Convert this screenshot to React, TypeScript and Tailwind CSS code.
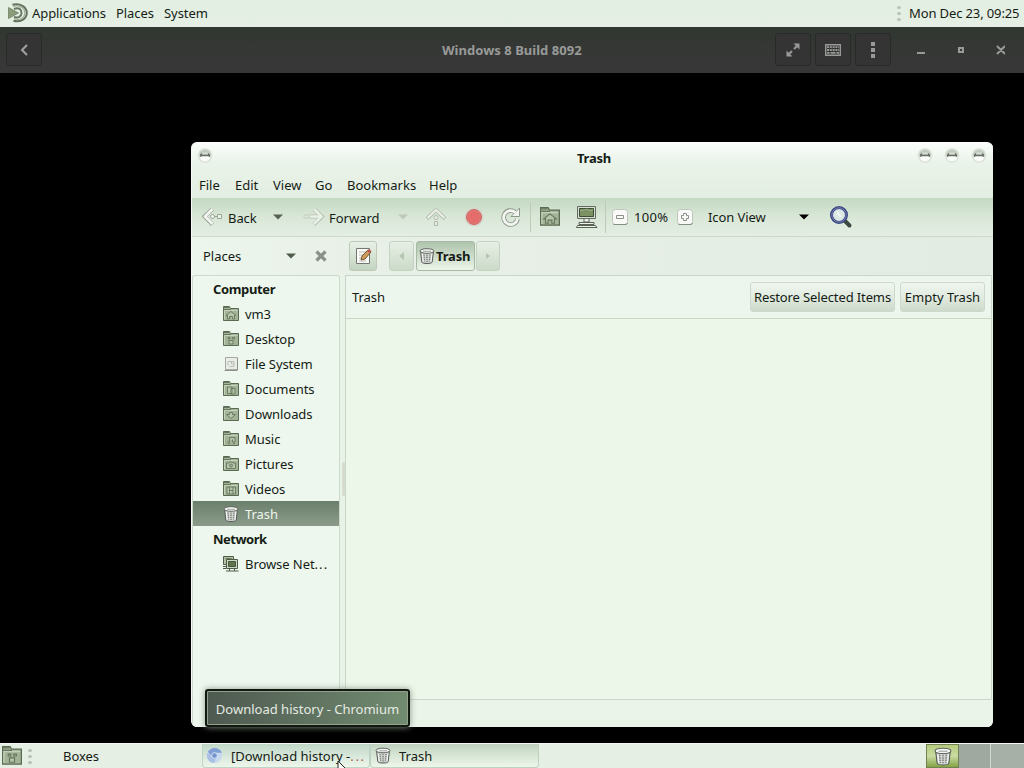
import React from 'react';

const Folder = ({ mark, className = 'w-4 h-4' }: { mark?: string; className?: string }) => (
  <svg className={className} viewBox="0 0 16 16" fill="none">
    <path d="M.5 14.500V.5h6l1 2h8v12z" fill="#a3b397" stroke="#5a6b53" />
    <path d="M1.500 13.500v-9h13" stroke="#c5d1ba" />
    <path d="M1 1.500h5M1 3.500h7" stroke="#66775f" />
    {mark && <path d={mark} fill="#b7c5ab" stroke="#64765c" strokeWidth=".9" />}
  </svg>
);

const marks = {
  home: 'M3 9.500l5-4 5 4h-1.500v3.500H9.500v-2.500h-3v2.500h-2V9.500z',
  desktop: 'M5 6.500h2v1.500H5zM9.500 6.500h2v1.500h-2zM6 9.500h4v3.500H6z',
  documents: 'M4.500 6h4.500v6.500H4.500zM8 7.500h4v5.500H8z',
  downloads: 'M3.500 8.500H6.500V6.500h3v2h3L8 12.500z',
  music: 'M4 11h2.500V6.500h5.500V11H9.500V8.500M5 12.500h2M10 12.500h2',
  pictures: 'M3.500 7h2.500l1-1h2l1 1h2.500v5.500h-9zM6.500 9.500a1.500 1.500 0 1 0 3 0a1.500 1.500 0 1 0-3 0z',
  videos: 'M4 6h8.500v7H4zM6.500 6v7M10 6v7M6.500 9.500h3.500',
};

const Trash = ({ className = 'w-4 h-4' }: { className?: string }) => (
  <svg className={className} viewBox="0 0 16 16" fill="none">
    <path d="M1.500 3l1.300 11c.2 1.100 2.500 1.500 5.200 1.500s5-.4 5.200-1.500L14.500 3z" fill="#d3d6d3" stroke="#555b57" />
    <path d="M5 6.500l.6 7M8 6.500v7.500M11 6.500l-.6 7" stroke="#747a73" strokeWidth="1.300" strokeDasharray="1.300 .8" />
    <path d="M12.800 6l-.8 7.500M3.300 6l.8 7.500" stroke="#fff" strokeWidth=".8" />
    <ellipse cx="8" cy="3" rx="7" ry="2.300" fill="#f6f7f6" stroke="#5f645f" />
    <path d="M4 3.300h8" stroke="#9ea49d" />
  </svg>
);

const Drive = () => (
  <svg className="w-4 h-4" viewBox="0 0 16 16" fill="none">
    <path d="M2.500 1.500h12v12h-12z" fill="#e9ece7" stroke="#a5aba4" />
    <path d="M1.500 14.500h13M14.500 2v12" stroke="#8c938b" />
    <path d="M5 9.500v-4h6v5H6.500M8.500 5v3h3" stroke="#b9bfb7" />
  </svg>
);

const Network = () => (
  <svg className="w-4 h-4" viewBox="0 0 16 16" fill="none">
    <path d="M.5 .5h10v8H.5z" fill="#b5c1a8" stroke="#4c5c46" />
    <path d="M2.500 2.500h6" stroke="#6a7d58" />
    <path d="M3.500 3.500h11v9h-11z" fill="#cfd8c5" stroke="#4c5c46" />
    <path d="M5.500 5.500h7v5h-7z" fill="#62764e" stroke="#46583c" />
    <path d="M0 10.500h3M0 12.500h3M6.500 13v2M11.500 13v2M3 15h12.500" stroke="#4c5c46" />
  </svg>
);

const Caret = ({ color }: { color: string }) => (
  <svg className="w-[10px] h-[6px] shrink-0" viewBox="0 0 10 6">
    <path d="M0 .5h10L5 5.500z" fill={color} />
  </svg>
);

const WinButton = () => (
  <svg className="w-[16px] h-[16px]" viewBox="0 0 16 16">
    <circle cx="8" cy="8.500" r="7.500" fill="#dfe6dc" />
    <circle cx="8" cy="8.500" r="6" fill="#c3cac1" />
    <path d="M2.500 9.500l1.500-1h8l1.500 1a5.500 5 0 0 1-11 0z" fill="#fbfdfa" />
    <path d="M3 10V7.500L5 6v1.700h6V6l2 1.500V10l-2-.8H5z" fill="#687065" />
    <path d="M5.500 5.500h5l-.5 1.500H6z" fill="#d9dfd7" />
  </svg>
);

const Zoom = ({ d }: { d: string }) => (
  <svg className="w-4 h-4 shrink-0" viewBox="0 0 16 16" fill="none">
    <rect x=".5" y=".5" width="15" height="15" rx="3" fill="#f9faf8" stroke="#bfc5bc" />
    <path d="M1.500 15.500h13l1-1.500" stroke="#878e84" />
    <path d={d} stroke="#8a9187" />
  </svg>
);

const places = [
  { name: 'vm3', icon: <Folder mark={marks.home} /> },
  { name: 'Desktop', icon: <Folder mark={marks.desktop} /> },
  { name: 'File System', icon: <Drive /> },
  { name: 'Documents', icon: <Folder mark={marks.documents} /> },
  { name: 'Downloads', icon: <Folder mark={marks.downloads} /> },
  { name: 'Music', icon: <Folder mark={marks.music} /> },
  { name: 'Pictures', icon: <Folder mark={marks.pictures} /> },
  { name: 'Videos', icon: <Folder mark={marks.videos} /> },
  { name: 'Trash', icon: <Trash />, active: true },
];

const Dots = () => (
  <div className="flex flex-col gap-[3px] w-1">
    <span className="h-[3px] w-[4px] rounded-sm bg-[#bcc4ba]" />
    <span className="h-[3px] w-[4px] rounded-sm bg-[#bcc4ba]" />
    <span className="h-[3px] w-[4px] rounded-sm bg-[#bcc4ba]" />
  </div>
);

const TopPanel = () => (
  <div className="h-[27px] shrink-0 flex items-center pb-px bg-linear-to-b from-[#e3efe2] to-[#e5efe5]">
    <svg className="w-[20px] h-[20px] ml-2 shrink-0" viewBox="0 0 20 20" fill="none">
      <path d="M4.500 1.800C12 -.5 18.800 4 18.800 10S12 19.500 5.500 17.800" stroke="#62725e" strokeWidth="2" />
      <path d="M5 3.500C11.500 1.500 16.800 5 16.800 10S12 17.500 6 16" stroke="#a3b19b" strokeWidth="1.200" />
      <path d="M6 6C11 4 13.500 6.500 13.500 10s-3.500 5.500-7.500 4" stroke="#697a64" strokeWidth="2" />
      <path d="M.5 4.500v11L10.500 10z" fill="#8b9c7b" stroke="#6f8065" strokeWidth=".8" />
    </svg>
    <span className="w-[88px] shrink-0 pl-1">Applications</span>
    <span className="w-12 shrink-0">Places</span>
    <span>System</span>
    <div className="ml-auto w-3 shrink-0"><Dots /></div>
    <span className="w-[115px] shrink-0 tracking-[-0.12px]">Mon Dec 23, 09:25</span>
  </div>
);

const boxButton = 'w-[36px] h-[33px] rounded-[3px] border border-[#282a28] bg-[#333433] flex items-center justify-center';

const BoxesBar = () => (
  <div className="relative h-[46px] shrink-0 flex items-center pl-[6px] pb-px bg-linear-to-b from-[#303730] via-[#353735] to-[#373737] text-[#989a98]">
    <div className={boxButton}>
      <svg className="w-[10px] h-[12px]" viewBox="0 0 10 12" fill="none">
        <path d="M8 1L3 6l5 5" stroke="#a0a2a0" strokeWidth="2" />
      </svg>
    </div>
    <span className="absolute left-[442px] font-bold tracking-[0.03px]">Windows 8 Build 8092</span>
    <div className="ml-auto flex items-center gap-1 mr-[19px]">
      <div className={boxButton}>
        <svg className="w-[16px] h-[16px]" viewBox="0 0 16 16" fill="none">
          <path d="M9 7l4-4M7 9l-4 4" stroke="#989a98" strokeWidth="2" />
          <path d="M8.500 1.500h6v6zM1.500 8.500v6h6z" fill="#989a98" />
        </svg>
      </div>
      <div className={boxButton}>
        <svg className="w-[16px] h-[12px]" viewBox="0 0 16 12" fill="none">
          <path d="M.7.7h14.600v10.600H.7z" stroke="#989a98" strokeWidth="1.400" />
          <path d="M2 3.200h12M2 6h12" stroke="#989a98" strokeWidth="1.800" strokeDasharray="2 .8" />
          <path d="M2 8.800h2.500m1 0h5m1 0h2.500" stroke="#989a98" strokeWidth="1.800" />
        </svg>
      </div>
      <div className={boxButton}>
        <svg className="w-1 h-[16px]" viewBox="0 0 4 16" fill="#989a98">
          <path d="M0 0h4v4H0zM0 6h4v4H0zM0 12h4v4H0z" />
        </svg>
      </div>
      <svg className="w-[88px] h-[12px] ml-[22px]" viewBox="0 0 88 12" fill="none" stroke="#989a98" strokeWidth="2">
        <path d="M0 9h8M42 4h4v4h-4zM80 2l8 8M88 2l-8 8" />
      </svg>
    </div>
  </div>
);

const Toolbar = () => (
  <div className="h-[39px] shrink-0 flex items-center pl-[10px] border-b border-[#ccd8ca] bg-linear-to-b from-[#c4d9c3] via-[#d9e7d7] to-[#e4eee3]">
    <svg className="w-[22px] h-[20px] shrink-0" viewBox="0 0 22 20" fill="none">
      <path d="M10.500 2L2.500 9.500l8 8" stroke="#9ca598" strokeWidth="4" />
      <path d="M10.500 2L3 9.500l7.500 7.500" stroke="#f3f6f1" strokeWidth="2.500" />
      <path d="M8.500 9.500a2 2 0 1 1 4 0a2 2 0 1 1-4 0M15.500 7.500h4v4h-4zM12.500 9.500h3" fill="#edf2eb" stroke="#9ca598" />
    </svg>
    <span className="w-[49px] pl-1 pt-px">Back</span>
    <Caret color="#566352" />
    <svg className="w-[22px] h-[20px] ml-5 shrink-0" viewBox="0 0 22 20" fill="none">
      <path d="M1 8h4v3H1z" fill="#e1eadf" stroke="#c3cdbf" />
      <path d="M11 2l8 7.500-8 8M6 9.500h12" stroke="#b8c2b4" strokeWidth="4" />
      <path d="M11 2l7.500 7.500-7.500 7.500M6.500 9.500h11.500" stroke="#e9f0e6" strokeWidth="2.500" />
    </svg>
    <span className="w-[73px] pl-1 pt-px tracking-normal">Forward</span>
    <Caret color="#bdcabb" />
    <svg className="w-[20px] h-[20px] ml-[18px]" viewBox="0 0 20 20" fill="none">
      <path d="M1 11.500l9-8.500 9 8.500" stroke="#b0baad" strokeWidth="3.800" />
      <path d="M1.500 11l8.500-8 8.500 8" stroke="#e9efe6" strokeWidth="2.300" />
      <path d="M8 10.500a2 2 0 1 1 4 0a2 2 0 1 1-4 0M8.500 14.500h3v4h-3z" fill="#e7ede4" stroke="#b0b9ad" />
    </svg>
    <svg className="w-[20px] h-[20px] ml-[18px]" viewBox="0 0 20 20">
      <circle cx="10" cy="10" r="9.500" fill="#d3d6cd" />
      <circle cx="10" cy="10" r="7.500" fill="#dc7772" stroke="#d96864" />
      <circle cx="10" cy="10" r="5.500" fill="#e66c6b" />
    </svg>
    <svg className="w-[22px] h-[20px] ml-[16px]" viewBox="0 0 22 20" fill="none">
      <path d="M17.500 12A7 7 0 1 1 15 5" stroke="#8f988c" strokeWidth="4.600" />
      <path d="M19.500 1v8.500h-8.500z" fill="#f3f6f1" stroke="#8f988c" />
      <path d="M17.500 12A7 7 0 1 1 15.500 5.500" stroke="#f3f6f1" strokeWidth="2.800" />
    </svg>
    <span className="w-px h-[30px] bg-[#bdcaba] ml-[8px] mr-[9px]" />
    <Folder mark={marks.home} className="w-[20px] h-[20px]" />
    <svg className="w-[22px] h-[22px] ml-[16px]" viewBox="0 0 22 22" fill="none">
      <path d="M1.500.5h18v12h-18z" fill="#d9ded4" stroke="#636d5d" />
      <path d="M3.500 2.500h14v8h-14z" fill="#7c9264" stroke="#3c4f35" />
      <path d="M4 5l7-2 4 2 2-2" stroke="#96a981" />
      <path d="M8 13v3h5v-3M3 16.500h15v2H3zM.5 21.500l1-2h18l1.500 2z" fill="#eef0eb" stroke="#596354" />
    </svg>
    <span className="w-px h-[32px] bg-[#bdcaba] ml-[7px] mr-[6px]" />
    <Zoom d="M4.500 6.500h7v3h-7z" />
    <span className="w-[49px] pl-[6px] tracking-[0.3px]">100%</span>
    <Zoom d="M6.500 4.500h3v2h2v3h-2v2h-3v-2h-2v-3h2z" />
    <span className="w-[106px] pl-[15px]">Icon View</span>
    <Caret color="#000" />
    <svg className="w-6 h-6 ml-[20px] shrink-0" viewBox="0 0 24 24" fill="none">
      <path d="M15 15l5.500 5.500" stroke="#3b4943" strokeWidth="4" strokeLinecap="round" />
      <circle cx="10" cy="10" r="7.500" fill="#dce8e6" stroke="#3a4680" strokeWidth="3" />
      <circle cx="10" cy="10" r="7.200" stroke="#7d89b9" strokeWidth=".9" />
      <path d="M8 7l4 5" stroke="#f2f7f3" strokeWidth="2" />
    </svg>
  </div>
);

const LocationBar = () => (
  <div className="h-[38px] shrink-0 flex items-center pl-[11px] bg-linear-to-r from-[#edf6ec] via-[#e8f0e8] via-20% to-[#e3ece3]">
    <span className="w-[83px] tracking-normal">Places</span>
    <Caret color="#4e5a4b" />
    <svg className="w-3 h-3 ml-[19px]" viewBox="0 0 12 12" fill="none">
      <path d="M1.500 1.500l9 9M10.500 1.500l-9 9" stroke="#899286" strokeWidth="3.200" />
    </svg>
    <div className="w-[28px] h-[30px] ml-[22px] rounded-[3px] border border-[#bbcbb8] bg-linear-to-b from-[#e9f1e7] to-[#c3d4c1] flex items-center justify-center">
      <svg className="w-[17px] h-[18px]" viewBox="0 0 17 18" fill="none">
        <path d="M1.500 1.500h13v15h-13z" fill="#fbfbf9" stroke="#72786f" />
        <path d="M4 5h7M4 8h5M4 11h4M4 14h7" stroke="#b8beb5" />
        <path d="M6 13l1-4 6-6 3 2-6 7z" fill="#ce9b59" stroke="#76583a" />
        <path d="M12 4l2-2 2.500 2-2 2z" fill="#bb5852" />
      </svg>
    </div>
    <div className="w-[25px] h-[30px] ml-[12px] rounded-[3px] border border-[#c5d3c3] bg-linear-to-b from-[#e7efe5] to-[#cbdbc9] flex items-center justify-center">
      <svg className="w-[6px] h-[8px]" viewBox="0 0 6 8"><path d="M5 0v8L0 4z" fill="#b6c6b3" /></svg>
    </div>
    <div className="w-[59px] h-[30px] ml-[2px] rounded-[3px] border border-[#a6b9a4] bg-linear-to-b from-[#afc4ad] via-[#ccdcc9] to-[#edf5ea] flex items-center pl-[2px]">
      <Trash className="w-[16px] h-[18px] shrink-0" />
      <span className="font-bold pl-[1px] tracking-[-0.15px]">Trash</span>
    </div>
    <div className="w-6 h-[30px] ml-[1px] rounded-[3px] border border-[#c5d3c3] bg-linear-to-b from-[#e7efe5] to-[#cbdbc9] flex items-center justify-center">
      <svg className="w-[6px] h-[8px]" viewBox="0 0 6 8"><path d="M1 1v6l4-3z" fill="#b6c6b3" /></svg>
    </div>
  </div>
);

const Sidebar = () => (
  <div className="w-[148px] shrink-0 border border-[#cdd9cb] border-b-0 rounded-t-[3px] bg-[#edf7ed] leading-[25px]">
    <div className="h-[25px] pl-[20px] pt-px font-bold tracking-[-0.35px]">Computer</div>
    {places.map((place) => (
      <div
        key={place.name}
        className={
          place.active
            ? 'h-[25px] flex items-center pt-px pl-[30px] bg-linear-to-b from-[#6b806c] to-[#8b9b8a] text-[#eef5ed]'
            : 'h-[25px] flex items-center pt-px pl-[30px]'
        }
      >
        <span className="w-[22px]">{place.icon}</span>
        {place.name}
      </div>
    ))}
    <div className="h-[25px] pl-[20px] pt-px font-bold tracking-[-0.5px]">Network</div>
    <div className="h-[25px] flex items-center pt-px pl-[30px]">
      <span className="w-[22px]"><Network /></span>
      Browse Net<span className="tracking-[1.1px]">...</span>
    </div>
  </div>
);

const actionButton = 'h-[30px] rounded-[3px] border border-[#ced8cc] bg-linear-to-b from-[#eff6ee] via-[#e1ebe0] to-[#cddacb] flex items-center justify-center';

const FileManager = () => (
  <div className="absolute left-[191px] top-[69px] w-[802px] h-[585px] rounded-[6px] overflow-hidden flex flex-col bg-[#e8f2e7] border-t border-l border-t-white border-l-[#f4faf3]">
    <div className="h-[55px] shrink-0 flex flex-col bg-linear-to-b from-[#fbfdfb] via-[#eaf3e9] via-35% to-[#e3eee2]">
      <div className="h-[29px] flex items-center">
        <div className="ml-[5px] mb-[5px]"><WinButton /></div>
        <span className="grow text-center font-bold pl-[58px] pt-px tracking-[-0.2px]">Trash</span>
        <div className="flex gap-[11px] mr-[6px] mb-[5px]">
          <WinButton /><WinButton /><WinButton />
        </div>
      </div>
      <div className="h-[25px] flex items-center pl-[7px] tracking-normal">
        <span className="w-9">File</span>
        <span className="w-[38px]">Edit</span>
        <span className="w-[42px]">View</span>
        <span className="w-8">Go</span>
        <span className="w-[82px]">Bookmarks</span>
        <span>Help</span>
      </div>
    </div>
    <Toolbar />
    <LocationBar />
    <div className="grow flex min-h-0 bg-[#e8f3e7]">
      <Sidebar />
      <div className="w-[6px] shrink-0 flex items-center justify-end border-r border-[#c9d5c7]">
        <span className="w-[3px] h-[34px] mb-[44px] rounded bg-[#d7dbd0]" />
      </div>
      <div className="grow flex flex-col border-t border-[#cad7c8] mr-px">
        <div className="h-[43px] shrink-0 flex items-center pl-[6px] pr-[6px] border-b border-r border-[#cbd8c9] bg-[#edf6ec]">
          <span>Trash</span>
          <div className={`${actionButton} w-[145px] ml-auto tracking-[-0.12px]`}>Restore Selected Items</div>
          <div className={`${actionButton} w-[85px] ml-[5px] tracking-normal`}>Empty Trash</div>
        </div>
        <div className="grow bg-[#edf7e9] border-r border-[#c9d5c7]" />
        <div className="h-[28px] shrink-0 border-t border-[#cbd5c9] bg-[#eaf4e9]" />
      </div>
    </div>
  </div>
);

const TaskBar = () => (
  <div className="h-[25px] shrink-0 flex items-center bg-[#e5efe4] border-t border-[#f2f8f1]">
    <Folder mark={marks.desktop} className="w-[20px] h-[20px] ml-[2px]" />
    <div className="ml-[6px]"><Dots /></div>
    <span className="ml-[31px] w-[139px]">Boxes</span>
    <div className="relative w-[168px] h-[24px] flex items-center pl-[3px] rounded-b border-x border-b border-[#bdd5c4] bg-linear-to-b from-[#c0d8c8] to-[#eef6eb] tracking-normal">
      <svg className="w-[17px] h-[17px] mr-[8px] shrink-0" viewBox="0 0 18 18" fill="none">
        <circle cx="9" cy="9" r="8" fill="#c8d8ee" />
        <path d="M17 6H9a3 3 0 0 0-3 4L2 5c3-5 11-6 15 1z" fill="#829fd5" />
        <path d="M1.500 6c-2 6 2 11 7 11l2-5-4-1z" fill="#aac0e4" />
        <circle cx="9" cy="9" r="3" fill="#7595d1" stroke="#d9e4f2" />
      </svg>
      [Download history -<span className="text-[#b05f48] tracking-[1.7px]">...</span>
      <svg className="absolute left-[134px] top-[17px] w-[8px] h-[10px]" viewBox="0 0 8 10">
        <path d="M1 0v10l7-3z" fill="#f7faf6" stroke="#202820" />
      </svg>
    </div>
    <div className="w-[169px] h-[24px] flex items-center pl-[4px] rounded-b border-x border-b border-[#bfd1bf] bg-linear-to-b from-[#bfd2bf] via-[#d8e6d5] to-[#edf6eb] tracking-normal">
      <Trash className="w-[16px] h-[17px] mr-[8px]" />
      Trash
    </div>
    <div className="ml-auto w-[33px] h-[24px] border border-[#718151] bg-linear-to-b from-[#b4cb7c] via-[#cbdca1] to-[#83a342] flex items-center justify-center">
      <Trash className="w-[18px] h-[19px]" />
    </div>
    <div className="w-8 h-[24px] bg-[#9fa99f] border-r border-[#d3d9d2]" />
    <div className="w-[33px] h-[24px] bg-[#a7b0a7]" />
  </div>
);

const App = () => {
  return (
    <div className="w-[1024px] h-[768px] overflow-hidden flex flex-col bg-black text-[13px] leading-[18px] tracking-[-0.07px] whitespace-nowrap text-[#151c15] font-['Noto_Sans',sans-serif]">
      <TopPanel />
      <BoxesBar />
      <main className="relative h-[670px] shrink-0 bg-black">
        <FileManager />
        <div className="absolute left-[205px] top-[616px] w-[205px] h-[38px] pt-[2px] rounded-[3px] border-2 border-[#101810] bg-linear-to-r from-[#4e5950] to-[#718b70] text-[#e5ebe3] tracking-normal flex items-center justify-center shadow-[0_0_6px_#8b9689] inset-ring inset-ring-[#91a18e]">
          Download history - Chromium
        </div>
      </main>
      <TaskBar />
    </div>
  );
};

export default App;
